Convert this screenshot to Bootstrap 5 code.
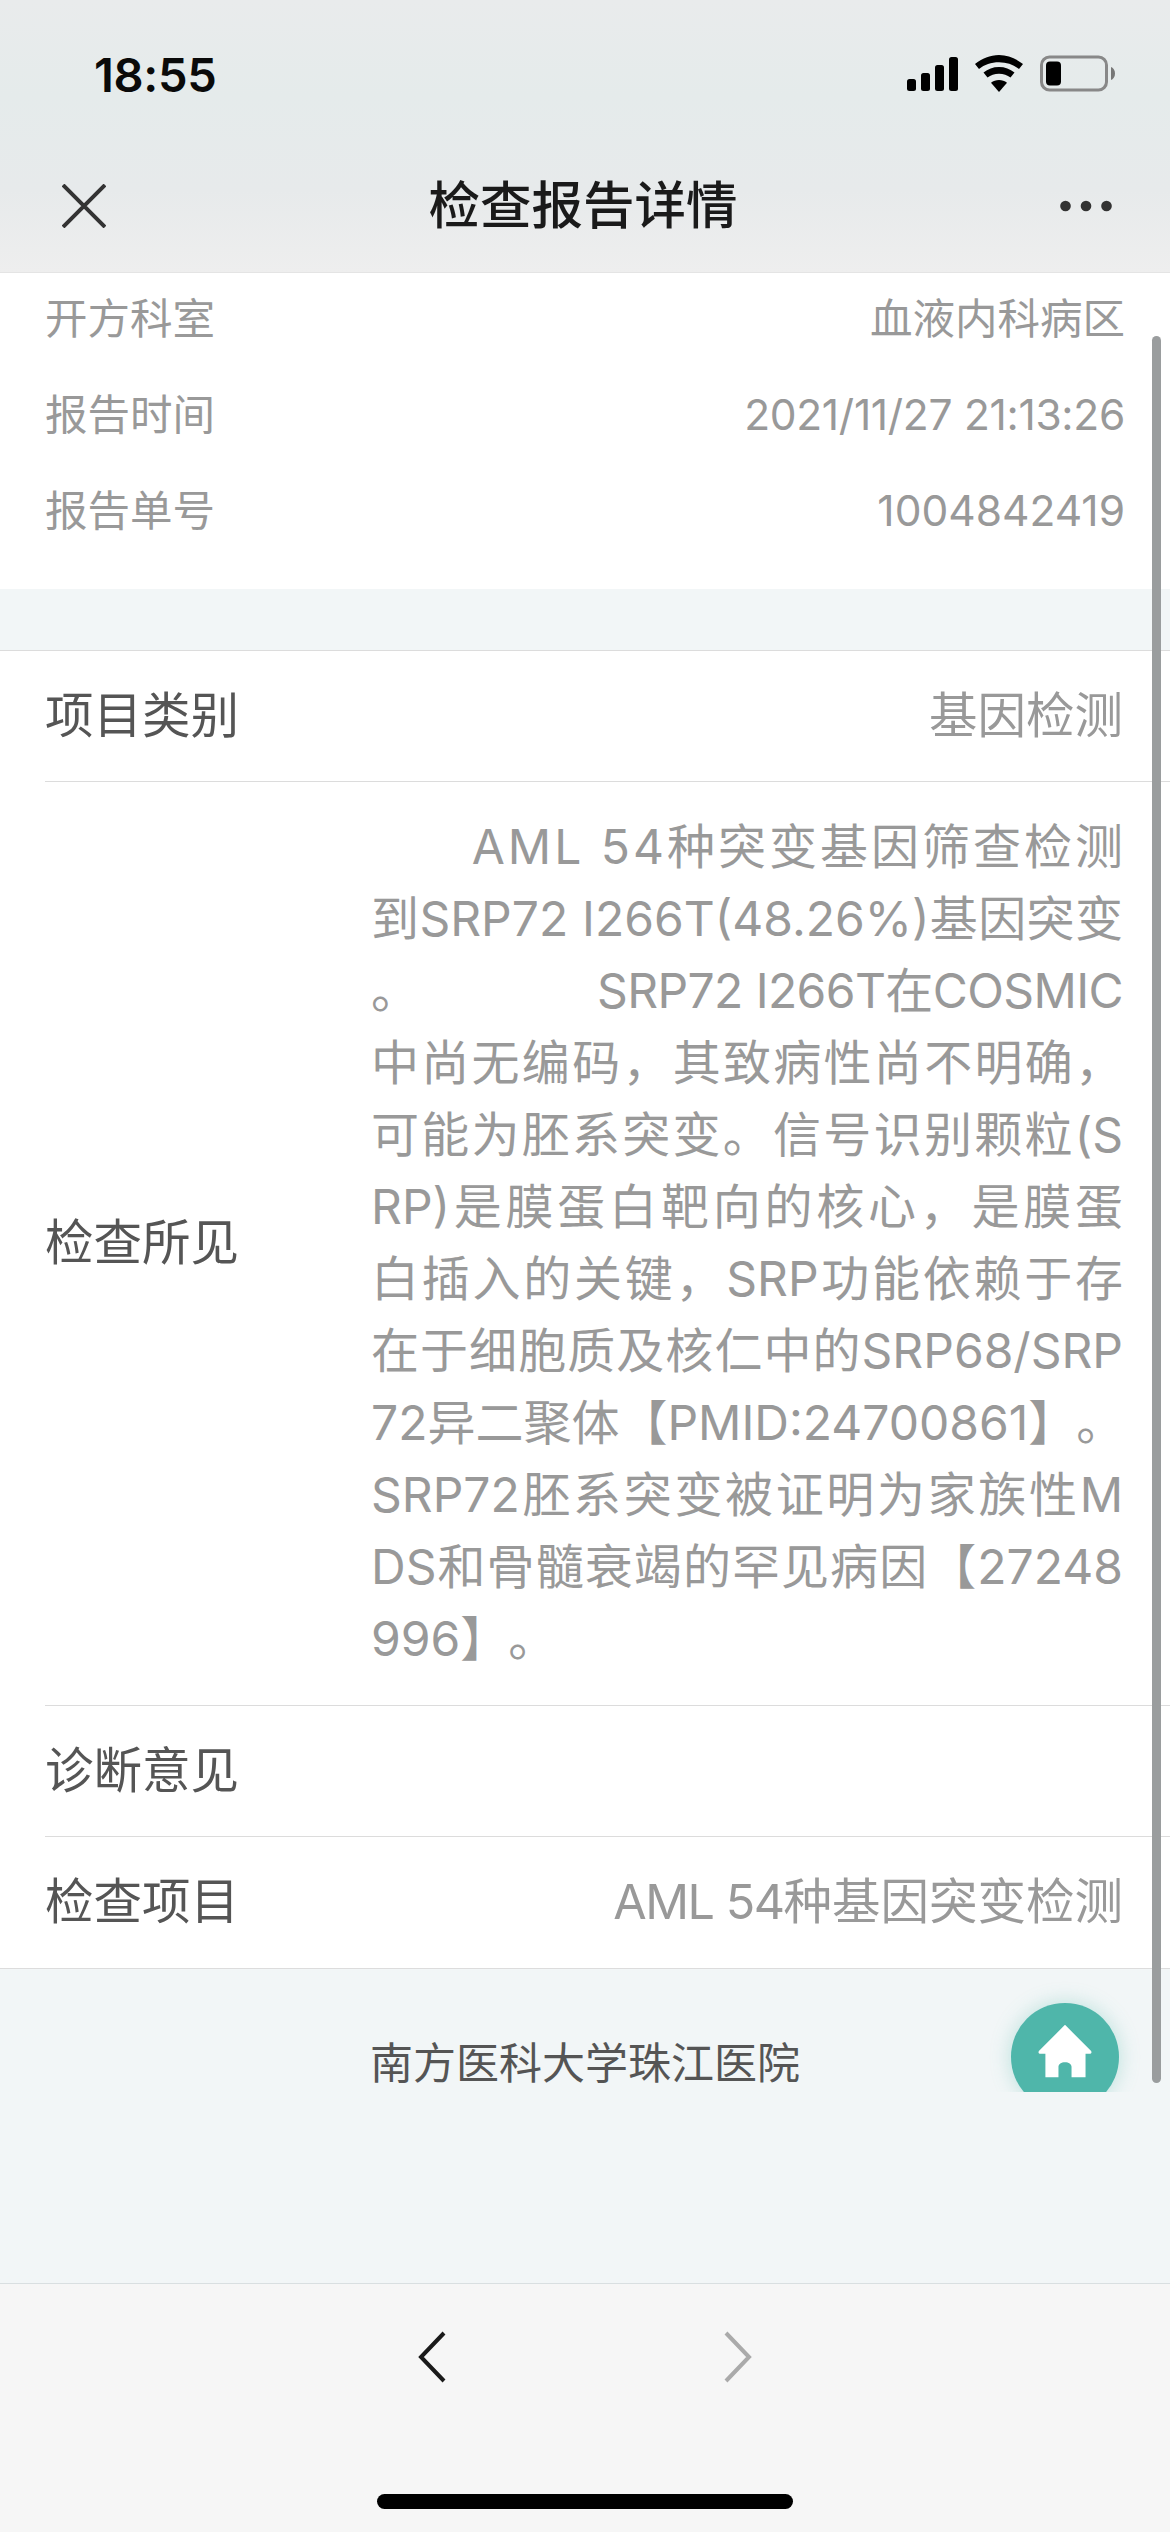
<!DOCTYPE html>
<html lang="zh">
<head>
    <meta charset="UTF-8">
    <title>检查报告详情</title>
    <link href="https://cdn.jsdelivr.net/npm/bootstrap@5.3.2/dist/css/bootstrap.min.css" rel="stylesheet">
    <style>
        body {
            width: 1170px;
            height: 2532px;
            overflow: hidden;
            background-color: #f2f6f7;
            font-family: Inter, "Noto Sans CJK SC", sans-serif;
            text-spacing-trim: space-all;
        }
        .phone-top {
            height: 273px;
            background: linear-gradient(180deg, #e9ebec 0%, #e5ebeb 35%, #e7eaeb 70%, #eeeeee 100%);
            border-bottom: 1px solid #e4e4e4;
        }
        .status-line { height: 150px; padding: 0 55px 0 94px; }
        .status-time { font-size: 47px; font-weight: 600; color: #0a0a0a; letter-spacing: -.3px; }
        .nav-line { height: 123px; padding: 0 58px 12px 62px; }
        .nav-title { font-size: 51.5px; font-weight: 500; color: #1a1a1a; line-height: 1; }
        .scroll-area { height: 2010px; overflow: hidden; }
        .info-block { background: #fff; margin-top: -2px; padding: 0 45px 30px 45px; font-size: 42.5px; color: #999; }
        .info-line { height: 96px; }
        .date-value { letter-spacing: -.3px; }
        .main-block { background: #fff; margin-top: 61px; border-top: 1px solid #dcdcdc; border-bottom: 1px solid #dcdcdc; padding-left: 45px; }
        .main-line { padding-right: 47px; min-height: 131px; border-bottom: 1px solid #dcdcdc; font-size: 48.5px; color: #999; }
        .main-line:last-child { border-bottom: 0; }
        .main-label { color: #555; width: 326px; flex-shrink: 0; }
        .latin-tight { letter-spacing: -1.5px; }
        .report-text { font-size: 48px; line-height: 72px; padding: 29px 0 30px; width: 752px; text-align: right; white-space: nowrap; }
        .report-text span { display: block; }
        .report-text .fill { text-align-last: justify; }
        .report-text .wide-line { letter-spacing: 3px; margin-right: -3px; }
        .report-text .tight-words { letter-spacing: -.6px; }
        .hospital-name { font-size: 43px; line-height: 60px; color: #555; padding-top: 64px; }
        .bottom-bar { height: 249px; background: #f6f6f6; border-top: 1px solid #d9dfe1; position: relative; }
        .nav-arrows { padding-top: 47px; gap: 278px; }
        .home-line { position: absolute; left: 377px; top: 210px; width: 416px; height: 15px; background: #000; border-radius: 8px; }
        .scroll-thumb { position: absolute; left: 1152px; top: 336px; width: 9px; height: 1747px; background: #9a9d9e; border-radius: 5px; }
        .home-clip { position: absolute; left: 980px; top: 1968px; width: 170px; height: 124px; overflow: hidden; }
        .home-btn { position: absolute; left: 31px; top: 35px; width: 108px; height: 108px; border-radius: 50%; background: #4fb6aa; box-shadow: 0 0 20px rgba(79, 182, 170, .35); }
    </style>
</head>

<body class="position-relative">
    <div class="phone-top">
        <div class="status-line d-flex justify-content-between align-items-center">
            <div class="status-time">18:55</div>
            <svg width="208" height="40" viewBox="0 0 208 40">
                <rect x="0" y="24" width="9" height="12" rx="2.5"/>
                <rect x="14" y="18" width="9" height="18" rx="2.5"/>
                <rect x="28" y="10" width="9" height="26" rx="2.5"/>
                <rect x="42" y="2" width="9" height="34" rx="2.5"/>
                <path d="M92 0c9 0 17 3.500 24 9l-4 5c-5.500-4.300-12-6.700-20-6.700S77.500 9.700 72 14l-4-5c7-5.500 15-9 24-9z"/>
                <path d="M92 12c6 0 11 2 15.500 5.500l-4 5c-3.200-2.500-7-3.800-11.500-3.800s-8.300 1.300-11.500 3.800l-4-5C81 14 86 12 92 12z"/>
                <path d="M92 25c3 0 5.700 1 8 2.700L92 37l-8-9.300c2.300-1.700 5-2.700 8-2.700z"/>
                <rect x="134.500" y="2" width="65" height="33" rx="8" fill="none" stroke="#888" stroke-width="3"/>
                <rect x="139" y="6.500" width="15" height="24" rx="4"/>
                <path d="M204 12c2 .8 4 3 4 6.500s-2 5.700-4 6.500z" fill="#777"/>
            </svg>
        </div>
        <div class="nav-line d-flex justify-content-between align-items-center">
            <svg width="44" height="44" viewBox="0 0 44 44"><path d="M1 1l42 42M43 1L1 43" stroke="#333" stroke-width="4" fill="none"/></svg>
            <div class="nav-title">检查报告详情</div>
            <svg width="52" height="12" viewBox="0 0 52 12" fill="#333"><circle cx="5.500" cy="6" r="5.300"/><circle cx="26" cy="6" r="5.300"/><circle cx="46.500" cy="6" r="5.300"/></svg>
        </div>
    </div>

    <div class="scroll-area">
        <div class="info-block">
            <div class="info-line d-flex justify-content-between align-items-center"><div>开方科室</div><div>血液内科病区</div></div>
            <div class="info-line d-flex justify-content-between align-items-center"><div>报告时间</div><div class="date-value">2021/11/27 21:13:26</div></div>
            <div class="info-line d-flex justify-content-between align-items-center"><div>报告单号</div><div>1004842419</div></div>
        </div>

        <div class="main-block">
            <div class="main-line d-flex justify-content-between align-items-center"><div class="main-label">项目类别</div><div>基因检测</div></div>
            <div class="main-line d-flex align-items-center">
                <div class="main-label">检查所见</div>
                <div class="report-text">
                    <span class="wide-line">AML 54种突变基因筛查检测</span>
                    <span class="fill">到SRP72 I266T(48.26%)基因突变</span>
                    <span class="d-flex justify-content-between"><b class="fw-normal">。</b><b class="fw-normal tight-words">SRP72 I266T在COSMIC</b></span>
                    <span class="fill">中尚无编码，其致病性尚不明确，</span>
                    <span class="fill">可能为胚系突变。信号识别颗粒(S</span>
                    <span class="fill">RP)是膜蛋白靶向的核心，是膜蛋</span>
                    <span class="fill">白插入的关键，SRP功能依赖于存</span>
                    <span class="fill">在于细胞质及核仁中的SRP68/SRP</span>
                    <span class="fill">72异二聚体【PMID:24700861】。</span>
                    <span class="fill">SRP72胚系突变被证明为家族性M</span>
                    <span class="fill">DS和骨髓衰竭的罕见病因【27248</span>
                    <span class="text-start">996】。</span>
                </div>
            </div>
            <div class="main-line d-flex justify-content-between align-items-center"><div class="main-label">诊断意见</div></div>
            <div class="main-line d-flex justify-content-between align-items-center"><div class="main-label">检查项目</div><div><i class="latin-tight fst-normal">AML 54</i>种基因突变检测</div></div>
        </div>

        <div class="hospital-name text-center">南方医科大学珠江医院</div>
    </div>

    <div class="bottom-bar">
        <div class="nav-arrows d-flex justify-content-center">
            <svg width="28" height="52" viewBox="0 0 28 52"><path d="M26 2L3 26l23 24" fill="none" stroke="#1a1a1a" stroke-width="4"/></svg>
            <svg width="28" height="52" viewBox="0 0 28 52"><path d="M2 2l23 24L2 50" fill="none" stroke="#aaa" stroke-width="4"/></svg>
        </div>
        <div class="home-line"></div>
    </div>

    <div class="scroll-thumb"></div>
    <div class="home-clip">
        <div class="home-btn d-flex justify-content-center">
            <svg class="mt-3 pt-1" width="60" height="60" viewBox="0 0 60 60" fill="#fff"><path d="M30 2L58 30c1 2 0 3-2 3h-4v25H37V47c0-3-3-5-7-5s-7 2-7 5v11H9V33H4c-2 0-3-1-2-3z"/></svg>
        </div>
    </div>
</body>
</html>
